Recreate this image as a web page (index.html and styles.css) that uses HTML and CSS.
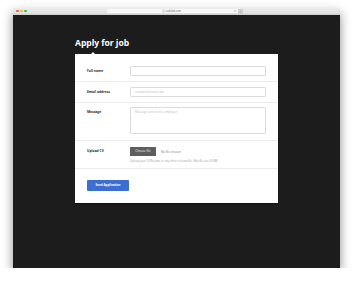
FILE: index.html
```html
<!DOCTYPE html>
<html lang="en">
<head>
    <meta charset="UTF-8">
    <meta name="viewport" content="width=device-width, initial-scale=1.0">
    <title>Apply for job</title>
    <link rel="stylesheet" href="styles.css">
</head>
<body>
    <div class="window">
        <div class="titlebar">
            <div class="lights">
                <span class="light red"></span>
                <span class="light yellow"></span>
                <span class="light green"></span>
            </div>
            <div class="address">
                <span class="addr-icon">&lsaquo;</span>
                <span class="addr-text">&#9432; codelab.com</span>
                <span class="addr-icon">&#8635;</span>
            </div>
            <span class="newtab">+</span>
        </div>

        <main class="page">
            <h1>Apply for job</h1>
            <form class="card">
                <div class="row">
                    <label>Full name</label>
                    <input type="text">
                </div>
                <div class="row">
                    <label>Email address</label>
                    <input type="text" placeholder="example@email.com">
                </div>
                <div class="row message">
                    <label>Message</label>
                    <textarea placeholder="Message sent to the employer"></textarea>
                </div>
                <div class="row">
                    <label>Upload CV</label>
                    <div class="upload">
                        <div class="file">
                            <span class="file-btn">Choose file</span>
                            <span class="file-name">No file chosen</span>
                        </div>
                        <p class="help">Upload your CV/Resume or any other relevant file. Max file size 50 MB</p>
                    </div>
                </div>
                <div class="row last">
                    <button type="button" class="send">Send Application</button>
                </div>
            </form>
        </main>
    </div>
</body>
</html>
```

FILE: styles.css
```css
body {
    margin: 0;
    padding: 8px 0 0 13px;
    background: #ffffff;
    font-family: "Open Sans", "Liberation Sans", sans-serif;
}
.window {
    width: 327px;
    box-shadow: 0 5px 10px rgba(0, 0, 0, 0.45);
}
.titlebar {
    height: 7px;
    display: grid;
    grid-template-columns: 94px 131px 1fr auto;
    align-items: center;
    background: linear-gradient(#ececec, #dedede);
    border-bottom: 1px solid #cfcfcf;
    box-sizing: border-box;
}
.lights {
    display: flex;
    gap: 1.5px;
    padding-left: 3px;
}
.light {
    width: 2.5px;
    height: 2.5px;
    border-radius: 50%;
}
.red { background: #f25f57; }
.yellow { background: #f8bd2e; }
.green { background: #29c840; }
.address {
    height: 4.5px;
    background: #f9f9f9;
    border-radius: 1px;
    display: flex;
    justify-content: space-between;
    align-items: center;
    padding: 0 1px;
    font-size: 2.6px;
    line-height: 4px;
    color: #888;
}
.addr-text {
    color: #555;
}
.newtab {
    width: 5px;
    height: 5px;
    margin-right: 2px;
    background: #cfcfcf;
    font-size: 4px;
    line-height: 5px;
    text-align: center;
    color: #777;
}
.page {
    height: 253px;
    box-sizing: border-box;
    background: #1c1c1c;
    padding: 23px 0 0 62px;
}
h1 {
    margin: 0 0 6px;
    font-size: 8.6px;
    line-height: 10px;
    font-weight: 700;
    color: #ffffff;
    letter-spacing: -0.05px;
}
.card {
    position: relative;
    width: 203px;
    padding-top: 7px;
    background: #ffffff;
    box-shadow: 0 1px 1px rgba(0, 0, 0, 0.4);
}
.card::before {
    content: "";
    position: absolute;
    top: -2.5px;
    left: 16px;
    border-left: 2px solid transparent;
    border-right: 2px solid transparent;
    border-bottom: 2.5px solid #ffffff;
}
.row {
    display: grid;
    grid-template-columns: 43px 136px;
    align-items: start;
    padding: 5px 12px;
    border-bottom: 1px solid #ececec;
}
.row.message {
    padding: 4px 12px 6px;
}
.row.last {
    display: block;
    padding: 11px 12px 12px;
    border-bottom: none;
}
label {
    font-size: 3.3px;
    line-height: 10px;
    font-weight: 700;
    color: #2a2a2a;
}
input,
textarea {
    display: block;
    box-sizing: border-box;
    width: 136px;
    height: 10px;
    margin: 0;
    padding: 0 4px;
    border: 0.5px solid #dcdcdc;
    border-radius: 1px;
    font-family: inherit;
    font-size: 3px;
    color: #333;
    background: #fff;
}
textarea {
    height: 27px;
    padding-top: 2px;
    resize: none;
}
input::placeholder,
textarea::placeholder {
    color: #b8b8b8;
}
.upload {
    display: flex;
    flex-direction: column;
    gap: 2.5px;
    padding-top: 1px;
}
.file {
    display: flex;
    align-items: center;
    gap: 5px;
}
.file-btn {
    width: 26px;
    height: 9px;
    background: #5e5e5e;
    color: #f2f2f2;
    font-size: 3px;
    line-height: 9px;
    text-align: center;
    border-radius: 0.5px;
}
.file-name {
    font-size: 3px;
    color: #777;
}
.help {
    margin: 0;
    font-size: 2.7px;
    line-height: 4px;
    color: #999;
}
.send {
    display: block;
    width: 42px;
    height: 11px;
    padding: 0;
    border: none;
    border-radius: 1px;
    background: #3a6ed3;
    color: #ffffff;
    font-family: inherit;
    font-size: 3px;
    font-weight: 700;
}
```
